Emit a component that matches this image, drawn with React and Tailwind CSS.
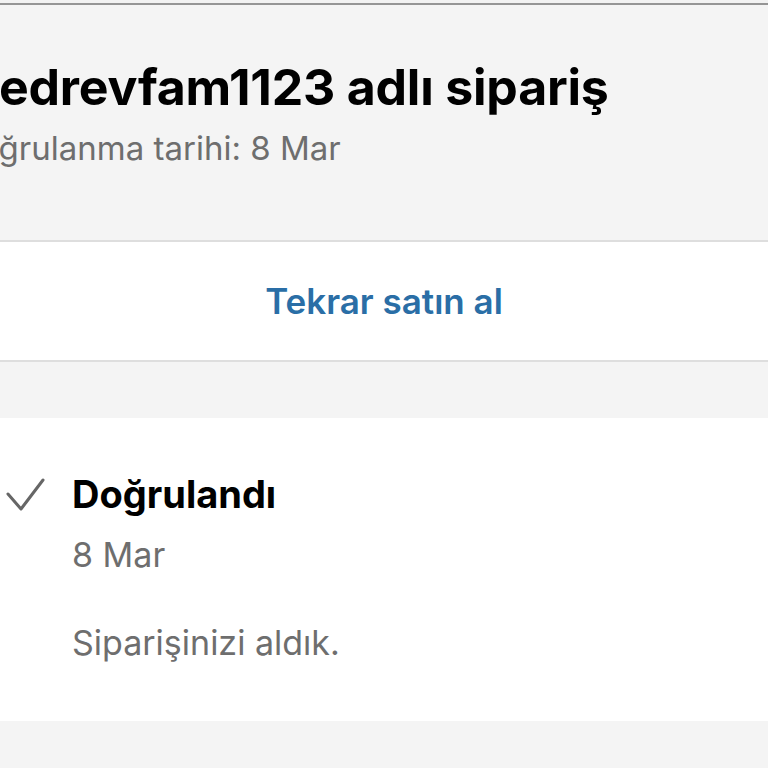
export default function App() {
  return (
    <div className="w-[768px] h-[768px] overflow-hidden bg-[#f4f4f4] font-['Inter','Liberation_Sans',sans-serif]">
      <div className="h-[3px] bg-[#f2f2f2]" />
      <div className="h-[2px] bg-[#959595]" />

      <div className="h-[235px] overflow-hidden pt-[54px]">
        <div className="ml-[-20px] whitespace-nowrap text-[50px] leading-[56px] font-bold tracking-[-0.2px] text-black">
          redrevfam1123 adlı sipariş
        </div>
        <div className="ml-[-45px] mt-[13px] whitespace-nowrap text-[33px] leading-[40px] text-[#6e6e6e]">
          Doğrulanma tarihi: 8 Mar
        </div>
      </div>

      <div className="h-[2px] bg-[#dedede]" />
      <div className="h-[118px] bg-white flex items-center justify-center">
        <span className="text-[35px] font-semibold text-[#2a6ea6]">Tekrar satın al</span>
      </div>
      <div className="h-[2px] bg-[#dedede]" />
      <div className="h-[56px]" />

      <div className="h-[303px] bg-white flex pt-[54px]">
        <div className="w-[72px] pt-[6px]">
          <svg width="50" height="36" viewBox="0 0 50 36" className="ml-[5px]">
            <path d="M3 16 L16 31 L38 2" fill="none" stroke="#666" strokeWidth="3" strokeLinecap="round" strokeLinejoin="round" />
          </svg>
        </div>
        <div className="flex flex-col">
          <div className="text-[38px] leading-[44px] font-bold text-black">Doğrulandı</div>
          <div className="mt-[19px] text-[34px] leading-[40px] text-[#6e6e6e]">8 Mar</div>
          <div className="mt-[48px] text-[34px] leading-[40px] text-[#6e6e6e]">Siparişinizi aldık.</div>
        </div>
      </div>
    </div>
  );
}
